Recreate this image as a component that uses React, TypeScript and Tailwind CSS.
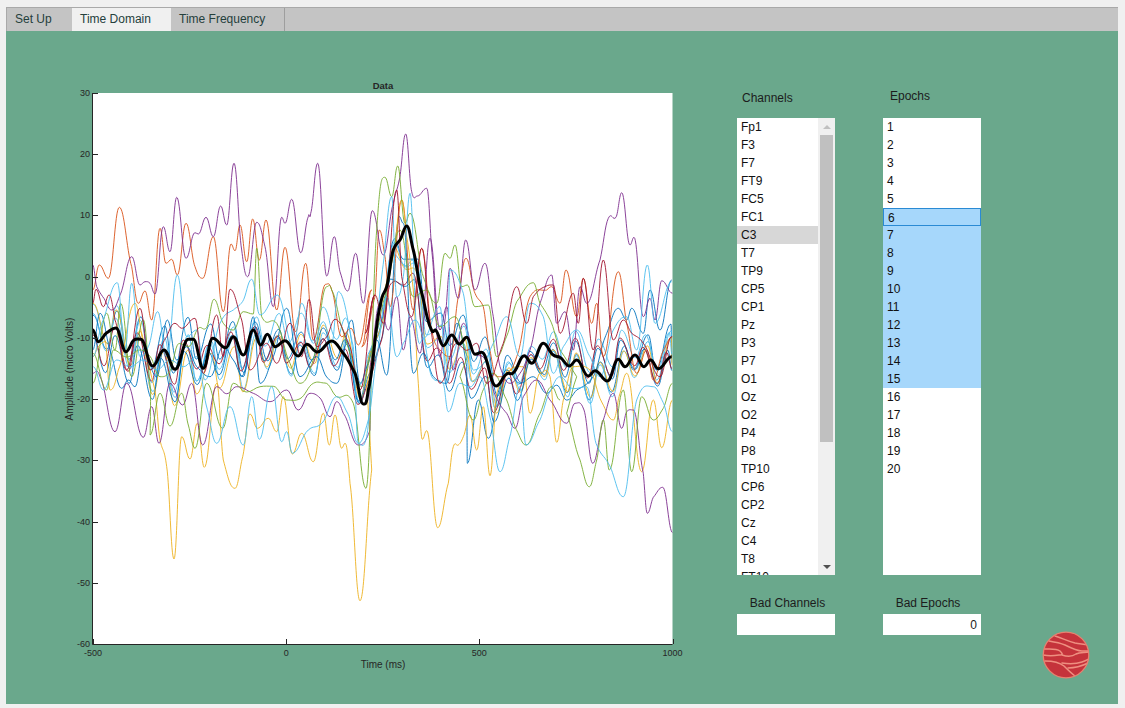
import React from "react";

type Seg = [keyof typeof O, string];
const O = { A: [60, 90], B: [360, 90], C: [60, 380], D: [360, 380] } as const;

function pts(segs: Seg[]): number[][] {
  const out: number[][] = [];
  for (const [k, s] of segs) {
    const [ox, oy] = O[k];
    for (const p of s.trim().split(/\s+/)) {
      const [x, y] = p.split(",").map(Number);
      out.push([ox + x / 3, oy + y / 3]);
    }
  }
  return out;
}

function densify(p: number[][]): number[][] {
  const out: number[][] = [];
  let sign = 1;
  for (let i = 0; i < p.length - 1; i++) {
    const a = p[i], b = p[i + 1];
    out.push(a);
    const dx = b[0] - a[0];
    if (dx > 17) {
      const n = Math.floor(dx / 9);
      for (let k = 1; k < n; k++) {
        const f = k / n;
        out.push([a[0] + dx * f, a[1] + (b[1] - a[1]) * f + sign * (5 + ((k * 7) % 5))]);
        sign = -sign;
      }
    }
  }
  out.push(p[p.length - 1]);
  return out;
}

function smooth(p: number[][]): string {
  let d = `M${p[0][0].toFixed(1)} ${p[0][1].toFixed(1)}`;
  for (let i = 0; i < p.length - 1; i++) {
    const a = p[Math.max(0, i - 1)], b = p[i], c = p[i + 1], e = p[Math.min(p.length - 1, i + 2)];
    const t = 0.17;
    const m1 = (b[1] - a[1]) * (c[1] - b[1]) <= 0 ? 0 : (c[1] - a[1]) * t;
    const m2 = (c[1] - b[1]) * (e[1] - c[1]) <= 0 ? 0 : (e[1] - b[1]) * t;
    const dx = (c[0] - b[0]) * 0.42;
    d += `C${(b[0] + dx).toFixed(1)} ${(b[1] + m1).toFixed(1)} ${(c[0] - dx).toFixed(1)} ${(c[1] - m2).toFixed(1)} ${c[0].toFixed(1)} ${c[1].toFixed(1)}`;
  }
  return d;
}

const blackPts = pts([
  ["A", "98,720 115,755 140,728 168,714 198,785 222,750 242,748 278,828 312,780 345,838 385,748 400,748 430,835 458,745 497,773 520,740 550,795 580,720 602,765 622,733 645,770 675,752 715,798 740,763 772,786 815,753 850,790 885,850"],
  ["C", "910,72"],
  ["B", "25,900 60,650 80,590 100,480 120,450 140,408 160,480 180,590 213,716 228,722 250,767 275,735 298,762 320,742 345,793 365,787 408,888 440,852 460,848 493,797 515,820 550,760 580,795 600,802 628,828 650,810 685,858 705,842 742,873 775,808 795,830 825,795 852,830 872,810 895,836 935,800"],
]);

function blackAt(x: number) {
  for (let i = 0; i < blackPts.length - 1; i++) {
    const a = blackPts[i], b = blackPts[i + 1];
    if (x >= a[0] && x <= b[0]) return a[1] + ((b[1] - a[1]) * (x - a[0])) / (b[0] - a[0]);
  }
  return blackPts[blackPts.length - 1][1];
}

const C = { blue: "#0072BD", orange: "#D95319", yellow: "#EDB120", purple: "#7E2F8E", green: "#77AC30", cyan: "#4DBEEE", red: "#A2142F" };

function gen(seed: number, amp: number, off: number): number[][] {
  const out: number[][] = [];
  const s = (n: number) => Math.sin(seed * 12.9898 + n * 78.233) * 0.5 + 0.5;
  let step = 0;
  let x = 93;
  let dir = s(1) > 0.5 ? 1 : -1;
  while (x < 672) {
    const r = s(step + 2);
    const v = dir * (0.35 + 0.65 * r) * amp;
    const slow = Math.sin(x / (38 + seed * 3) + seed) * amp * 0.6;
    out.push([x, Math.min(640, blackAt(x) * 0.85 + 52 + off + v + slow)]);
    x += 8 + 7 * s(step + 40);
    dir = -dir;
    step++;
  }
  out.push([672, blackAt(672) + off]);
  return out;
}

const t = (c: string, segs: Seg[]) => ({ c, d: smooth(densify(pts(segs))) });

const handTraces: { c: string; d: string }[] = [
  t(C.blue, [
    ["A", "98,780 120,670 150,780 185,895 205,870 225,890 250,780 290,860 322,690 350,810 380,770 410,830 450,860 490,770 520,810 550,860 580,680 600,880 640,800 680,655 720,860 770,800 830,880 875,690 900,880"],
    ["B", "20,830 50,750 80,855 110,420 130,400 160,850 190,790 220,860 260,880 290,700 320,830"],
    ["D", "322,250 355,60 385,175 420,20 440,-30 480,10 520,-10 560,40 650,30 700,-10"],
    ["B", "775,655 800,690 815,655 850,730 870,600 900,720 935,570"],
  ]),
  t(C.orange, [
    ["A", "98,600 118,525 145,565 178,352 215,530 235,640 255,603 275,690 300,415 318,520 335,508 352,555 378,400 405,530 428,565 460,440 490,665 513,462 525,482 540,405 560,515 578,387 598,510 618,390 650,660 675,472 707,725 737,520 760,750 797,583 815,600 845,740 873,715 895,765 935,600"],
    ["B", "5,770 45,620 58,420 75,500 90,650 125,330 160,660 185,475 215,720 240,780 270,800 295,620 318,505 345,610 370,650 385,760 410,860 470,800 510,620 560,600 575,590 600,640 618,540 650,680 670,565 695,700 710,640 730,800 775,545 800,700 830,850 860,780 880,870 938,740"],
  ]),
  t(C.yellow, [
    ["A", "98,800 115,770 135,755 150,900 175,840 225,640 250,760 285,900"],
    ["C", "300,180 320,260 342,537 365,170 390,237 412,130 433,262 470,10 490,240 525,325 548,230 570,102 592,145 625,115 650,155 670,50 697,222 725,160 760,245 790,100 808,195 825,105 845,205 855,190 870,310 900,662 935,270"],
    ["B", "20,890 60,660 100,500 125,330 140,440 160,600 175,880"],
    ["D", "187,178 200,152 233,443 265,310 280,200 295,195 310,170 330,105 350,210 370,80 390,287 410,40 450,-30 490,-40 510,100 540,-20 570,-10 590,187 610,60 640,-40 690,-30 760,120 780,40 800,-20 845,275 880,60 905,203 938,60"],
  ]),
  t(C.purple, [
    ["A", "98,525 110,590 128,620 155,660 180,615 215,500 240,585 255,575 270,580 285,612 310,410 330,485 350,322 378,505 405,428 415,432 438,382 460,440 482,348 500,405 522,220 545,480 563,560 590,397 615,470 640,650 665,382 675,400 695,328 722,488 745,380 752,370 773,220 800,558 823,440 840,545 863,603 887,490 910,640 937,362"],
    ["B", "70,495 100,340 118,270 137,132 155,305 172,318 200,295 215,480 240,800 255,690 270,535 295,625 317,450 345,600 375,520 400,680 420,830 450,880 480,850 510,780 540,640 575,555 590,700 615,665 640,780 660,590 680,640 720,510 745,385 768,382 785,308 810,465 822,442 850,680 870,625 885,690 905,572 938,610"],
  ]),
  t(C.purple, [
    ["A", "98,850 120,860"],
    ["C", "165,155 200,10 250,172 275,80 297,190 330,10 368,75 395,10 428,195 470,20 530,20 580,40 630,65 680,30 715,90 750,40 810,110 830,65 850,100 895,195 930,150"],
    ["B", "30,830 60,640 85,720 110,620 130,780 150,680 180,790 210,445 240,720 260,650 280,840 310,700"],
    ["D", "440,100 465,145 490,50 530,0 570,60 620,130 645,70 672,90 698,250 730,120 760,40 785,145 800,95 820,90 850,280 862,400 880,352 908,322 938,458"],
  ]),
  t(C.green, [
    ["A", "98,880 140,670 165,780 182,640 215,860 250,690 272,900"],
    ["C", "270,165 300,40 330,138 365,40 385,135 405,205 440,10 488,145 520,10 600,20 680,60 760,10 830,50 880,70 918,325"],
    ["B", "50,420 75,262 95,320 113,228 135,400 150,370 190,560 230,640 255,490 270,505 285,465 305,590 322,585 345,650 385,645 410,800 470,635 520,578 540,640 600,780 650,860"],
    ["D", "620,100 660,240 688,320 710,240 730,120 748,270 790,30 815,275 845,50 880,120 938,10"],
  ]),
  t(C.green, [
    ["A", "98,790 140,900 160,780 240,780 300,860 415,715 440,712 462,628 490,700 520,720 550,665 580,672 590,475 605,680 650,700 690,820 720,880 760,810 800,590 815,600 850,725 870,790 905,890"],
    ["B", "30,800 80,600 120,420 160,620 200,600 240,710 285,680 322,800"],
    ["D", "300,-10 340,120 400,-20 440,60 498,195 540,100 575,20 600,60"],
  ]),
  t(C.cyan, [
    ["A", "98,800 125,700 172,578 195,780 215,580 240,800 265,770 293,665 320,800 352,555 380,740 410,720 435,870 480,700 520,660 575,568 600,675 652,615 700,770 725,640 760,760 790,695 815,760 835,605 880,770"],
    ["C", "895,190 920,170"],
    ["B", "40,800 95,320 110,620 130,560 150,310 170,720 190,745 240,650 260,880 270,540 310,610 340,840 400,760 440,680 480,800 510,640 550,680 580,850 610,770 650,720 690,800 720,860 760,720 800,680 830,780 862,525 885,700 935,575"],
  ]),
  t(C.cyan, [
    ["C", "100,-40 130,30 170,-60 210,-40 250,-60 290,-30 330,-60 370,-40 410,-70 470,190 510,80 550,195 575,50 598,178 635,20 665,185 680,155 697,220 745,150 785,130 830,50 895,190 925,120"],
    ["B", "50,800 80,620 110,800 130,760 165,690 190,745 215,860 250,880"],
    ["D", "265,95 300,10 360,-10 420,275 480,20 498,195 540,120 600,-10 680,20 708,190 745,250 790,350 830,60 880,20 938,155"],
  ]),
  t(C.red, [
    ["A", "98,640 108,598 130,650 147,615 165,690 200,840 240,655 270,840 320,740 345,700 365,715 405,685 430,850 470,675 490,800 510,598 545,690 570,840 620,760 650,820 690,700 725,800 747,628 770,770 800,740 825,688 870,770 900,900 945,615"],
    ["B", "15,730 45,615 70,700 110,300 125,560 155,680 185,475 210,700 240,880 290,760 350,760 380,880 430,760 470,590 500,700 520,620 555,590 580,585 600,730 640,610 655,700 670,565 700,780 730,510 760,750 790,690 815,730 850,760 900,860 935,740"],
  ]),
];

const genTraces = [
  { c: C.blue, d: smooth(gen(1, 26, 0)) },
  { c: C.cyan, d: smooth(gen(2, 28, 6)) },
  { c: C.yellow, d: smooth(gen(3, 26, 8)) },
  { c: C.cyan, d: smooth(gen(5, 24, -2)) },
  { c: C.blue, d: smooth(gen(6, 24, 14)) },
  { c: C.red, d: smooth(gen(7, 22, 12)) },
];

const yTicks = [30, 20, 10, 0, -10, -20, -30, -40, -50, -60];
const xTicks = [-500, 0, 500, 1000];
const Y = (v: number) => 93 + ((30 - v) * 551) / 90;
const X = (v: number) => 93 + ((v + 500) * 579.5) / 1500;

function Chart() {
  return (
    <svg width="640" height="600" viewBox="60 75 640 600" className="block shrink-0" style={{ fontFamily: '"Liberation Sans", Arial, sans-serif' }}>
      <rect x="93" y="93" width="579.5" height="551" fill="#ffffff" />
      <defs>
        <clipPath id="plot"><rect x="93" y="93" width="579.5" height="551" /></clipPath>
      </defs>
      <g clipPath="url(#plot)" fill="none" strokeWidth="1" strokeLinejoin="round" strokeOpacity="0.9">
        {genTraces.map((tr, i) => <path key={i} d={tr.d} stroke={tr.c} />)}
        {handTraces.map((tr, i) => <path key={i} d={tr.d} stroke={tr.c} />)}
      </g>
      <path d={smooth(blackPts)} stroke="#000000" strokeWidth="3" fill="none" clipPath="url(#plot)" />
      <path d="M92.5 93V644.5H672.5" fill="none" stroke="#262626" strokeWidth="1" />
      {yTicks.map(v => (
        <g key={v}>
          <line x1="93" x2="98" y1={Math.round(Y(v)) + 0.5} y2={Math.round(Y(v)) + 0.5} stroke="#262626" />
          <text x="90" y={Y(v) + 3} textAnchor="end" fontSize="9" fill="#262626">{v}</text>
        </g>
      ))}
      {xTicks.map(v => (
        <g key={v}>
          <line x1={Math.round(X(v)) + 0.5} x2={Math.round(X(v)) + 0.5} y1="639" y2="644" stroke="#262626" />
          <text x={X(v)} y="656" textAnchor="middle" fontSize="9" fill="#262626">{v}</text>
        </g>
      ))}
      <text x="383" y="89" textAnchor="middle" fontSize="9.5" fontWeight="bold" fill="#262626">Data</text>
      <text x="383" y="668" textAnchor="middle" fontSize="10" fill="#262626">Time (ms)</text>
      <text transform="translate(73 369) rotate(-90)" textAnchor="middle" fontSize="10" fill="#262626">Amplitude (micro Volts)</text>
    </svg>
  );
}

const channels = ["Fp1","F3","F7","FT9","FC5","FC1","C3","T7","TP9","CP5","CP1","Pz","P3","P7","O1","Oz","O2","P4","P8","TP10","CP6","CP2","Cz","C4","T8","FT10"];

function Scrollbar() {
  return (
    <div className="w-[17px] shrink-0 bg-[#f0f0f0] flex flex-col items-center">
      <div className="h-[17px] w-full flex items-center justify-center">
        <div className="w-0 h-0 border-l-[4px] border-r-[4px] border-b-[4px] border-l-transparent border-r-transparent border-b-[#c0c0c0]" />
      </div>
      <div className="w-[13px] h-[307px] bg-[#c0c0c0]" />
      <div className="flex-1" />
      <div className="h-[17px] w-full flex items-center justify-center">
        <div className="w-0 h-0 border-l-[4px] border-r-[4px] border-t-[4px] border-l-transparent border-r-transparent border-t-[#505050]" />
      </div>
    </div>
  );
}

function Logo() {
  return (
    <svg width="48" height="48" viewBox="0 0 48 48" className="block">
      <defs><clipPath id="lg"><circle cx="24" cy="24" r="22.5" /></clipPath></defs>
      <circle cx="24" cy="24" r="22.8" fill="#C5333B" stroke="#E8806F" strokeWidth="1.3" />
      <g clipPath="url(#lg)" fill="none" stroke="#EE8F80" strokeWidth="1.5" strokeLinecap="round">
        <path d="M13 5C20 7 25 10 33 12C38 13 42 13 46 14" />
        <path d="M7 10C13 11 18 12 23 14C29 17 35 20 40 20C43 20 45 20 47 20" />
        <path d="M1 18C8 18 14 17 18 20C21 23 21 24 17 24C11 25 6 25 1 24" />
        <path d="M20 24C26 26 30 26 34 23C38 21 43 22 47 21" />
        <path d="M20 32C27 33 34 33 40 31C43 30 45 29 47 28" />
        <path d="M3 30C10 30 17 31 22 35C26 39 29 42 33 45" />
        <path d="M26 37C32 37 40 35 46 32" />
      </g>
    </svg>
  );
}

export default function App() {
  return (
    <div className="w-[1125px] h-[708px] bg-[#f0f0f0] pt-[7px] pl-[6px] pr-[7px] pb-[4px] flex flex-col overflow-hidden text-[12px] text-[#1c1c1c]" style={{ fontFamily: '"Liberation Sans", Arial, sans-serif' }}>
      <div className="h-[24px] shrink-0 bg-[#c4c4c4] border-t border-l border-[#a9a9a9] flex text-[#24403c]">
        <div className="w-[65px] pl-[8px] pb-[2px] flex items-center">Set Up</div>
        <div className="w-[99px] pl-[8px] pb-[2px] flex items-center bg-[#f0f0f0]">Time Domain</div>
        <div className="w-[114px] pl-[8px] pb-[2px] flex items-center border-r border-[#9e9e9e]">Time Frequency</div>
      </div>
      <div className="flex-1 min-h-0 bg-[#6aa88c] flex items-start pt-[44px] pl-[54px]">
        <Chart />
        <div className="ml-[37px] w-[98px] pt-[16px] flex flex-col">
          <div className="h-[27px] pl-[5px] leading-[14px]">Channels</div>
          <div className="h-[457px] flex bg-white overflow-hidden text-[#111111]">
            <div className="flex-1 flex flex-col">
              {channels.map(c => (
                <div key={c} className={`h-[18px] shrink-0 pl-[4px] leading-[18px] ${c === "C3" ? "bg-[#d7d7d7]" : ""}`}>{c}</div>
              ))}
            </div>
            <Scrollbar />
          </div>
          <div className="mt-[21px] h-[18px] text-center leading-[14px] pl-[3px]">Bad Channels</div>
          <div className="h-[21px] bg-white" />
        </div>
        <div className="ml-[48px] w-[98px] pt-[14px] flex flex-col">
          <div className="h-[29px] pl-[7px] leading-[14px]">Epochs</div>
          <div className="h-[457px] bg-white overflow-hidden text-[#111111] flex flex-col">
            {Array.from({ length: 20 }, (_, i) => i + 1).map(n => (
              <div key={n} className={`h-[18px] shrink-0 pl-[4px] leading-[18px] ${n === 6 ? "bg-[#a6d7fb] border border-[#2a8ad4] pl-[3px] leading-[16px]" : n > 6 && n < 16 ? "bg-[#a6d7fb]" : ""}`}>{n}</div>
            ))}
          </div>
          <div className="mt-[21px] h-[18px] text-center leading-[14px] pr-[8px]">Bad Epochs</div>
          <div className="h-[21px] bg-white flex items-center justify-end pr-[4px]">0</div>
        </div>
        <div className="ml-[61px] mt-[556px]"><Logo /></div>
      </div>
    </div>
  );
}
